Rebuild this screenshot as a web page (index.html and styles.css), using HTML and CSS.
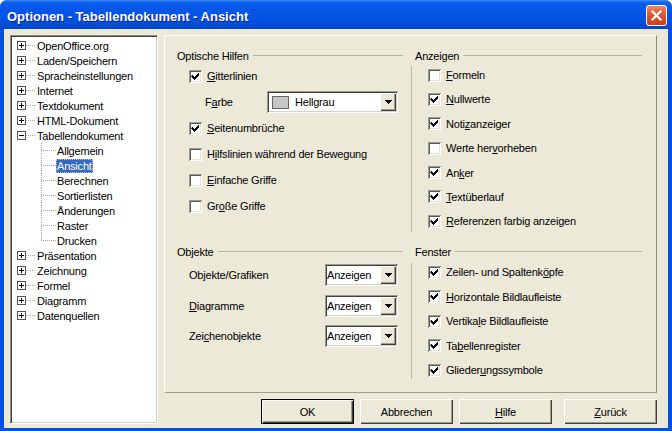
FILE: index.html
```html
<!DOCTYPE html>
<html lang="de">
<head>
<meta charset="utf-8">
<title>Optionen - Tabellendokument - Ansicht</title>
<link rel="stylesheet" href="styles.css">
</head>
<body>
<div class="window">
  <div class="titlebar">
    <span class="title">Optionen - Tabellendokument - Ansicht</span>
    <span class="close"><svg width="19" height="19" viewBox="0 0 19 19"><path d="M5.5 5.5l8 8M13.5 5.5l-8 8" stroke="#fff" stroke-width="2.2" stroke-linecap="square"/></svg></span>
  </div>
  <div class="client">
    <div class="tree">
      <div class="node"><span class="exp plus"></span><span class="conn"></span><span class="lbl">OpenOffice.org</span></div>
      <div class="node"><span class="exp plus"></span><span class="conn"></span><span class="lbl">Laden/Speichern</span></div>
      <div class="node"><span class="exp plus"></span><span class="conn"></span><span class="lbl">Spracheinstellungen</span></div>
      <div class="node"><span class="exp plus"></span><span class="conn"></span><span class="lbl">Internet</span></div>
      <div class="node"><span class="exp plus"></span><span class="conn"></span><span class="lbl">Textdokument</span></div>
      <div class="node"><span class="exp plus"></span><span class="conn"></span><span class="lbl">HTML-Dokument</span></div>
      <div class="node"><span class="exp minus"></span><span class="conn"></span><span class="lbl">Tabellendokument</span></div>
      <div class="node child"><span class="branch"></span><span class="lbl">Allgemein</span></div>
      <div class="node child"><span class="branch"></span><span class="lbl sel">Ansicht</span></div>
      <div class="node child"><span class="branch"></span><span class="lbl">Berechnen</span></div>
      <div class="node child"><span class="branch"></span><span class="lbl">Sortierlisten</span></div>
      <div class="node child"><span class="branch"></span><span class="lbl">Änderungen</span></div>
      <div class="node child"><span class="branch"></span><span class="lbl">Raster</span></div>
      <div class="node child last"><span class="branch"></span><span class="lbl">Drucken</span></div>
      <div class="node"><span class="exp plus"></span><span class="conn"></span><span class="lbl">Präsentation</span></div>
      <div class="node"><span class="exp plus"></span><span class="conn"></span><span class="lbl">Zeichnung</span></div>
      <div class="node"><span class="exp plus"></span><span class="conn"></span><span class="lbl">Formel</span></div>
      <div class="node"><span class="exp plus"></span><span class="conn"></span><span class="lbl">Diagramm</span></div>
      <div class="node"><span class="exp plus"></span><span class="conn"></span><span class="lbl">Datenquellen</span></div>
    </div>
    <div class="main">
      <div class="panel">
        <div class="col colL">
          <div class="legend legL"><span>Optische Hilfen</span></div>
          <div class="rowsL">
            <div class="cb r26"><span class="box"><svg class="chk" width="13" height="13" viewBox="0 0 13 13"><path d="M3 5h1v1h1v1h1v-1h1v-1h1v-1h1v-1h1v3h-1v1h-1v1h-1v1h-1v1h-1v-1h-1v-1h-1v-1h-1z"/></svg></span><span><u>G</u>itterlinien</span></div>
            <div class="field r26"><span class="flabel">F<u>a</u>rbe</span>
              <div class="combo wide"><span class="swatch"></span><span class="ctext">Hellgrau</span><span class="cbtn"><svg width="7" height="4" viewBox="0 0 7 4"><path d="M0 0h7v1h-1v1h-1v1h-1v1h-1v-1h-1v-1h-1v-1h-1z"/></svg></span></div>
            </div>
            <div class="cb r26"><span class="box"><svg class="chk" width="13" height="13" viewBox="0 0 13 13"><path d="M3 5h1v1h1v1h1v-1h1v-1h1v-1h1v-1h1v3h-1v1h-1v1h-1v1h-1v1h-1v-1h-1v-1h-1v-1h-1z"/></svg></span><span><u>S</u>eitenumbrüche</span></div>
            <div class="cb r26"><span class="box"></span><span>H<u>i</u>lfslinien während der Bewegung</span></div>
            <div class="cb r26"><span class="box"></span><span><u>E</u>infache Griffe</span></div>
            <div class="cb r26"><span class="box"></span><span>Gr<u>o</u>ße Griffe</span></div>
          </div>
        </div>
        <div class="col colR">
          <div class="legend legR"><span>Anzeigen</span></div>
          <div class="vbody vtop">
            <div class="cb r18"><span class="box"></span><span><u>F</u>ormeln</span></div>
            <div class="cb r18"><span class="box"><svg class="chk" width="13" height="13" viewBox="0 0 13 13"><path d="M3 5h1v1h1v1h1v-1h1v-1h1v-1h1v-1h1v3h-1v1h-1v1h-1v1h-1v1h-1v-1h-1v-1h-1v-1h-1z"/></svg></span><span><u>N</u>ullwerte</span></div>
            <div class="cb r18"><span class="box"><svg class="chk" width="13" height="13" viewBox="0 0 13 13"><path d="M3 5h1v1h1v1h1v-1h1v-1h1v-1h1v-1h1v3h-1v1h-1v1h-1v1h-1v1h-1v-1h-1v-1h-1v-1h-1z"/></svg></span><span>Noti<u>z</u>anzeiger</span></div>
            <div class="cb r18"><span class="box"></span><span>Werte her<u>v</u>orheben</span></div>
            <div class="cb r18"><span class="box"><svg class="chk" width="13" height="13" viewBox="0 0 13 13"><path d="M3 5h1v1h1v1h1v-1h1v-1h1v-1h1v-1h1v3h-1v1h-1v1h-1v1h-1v1h-1v-1h-1v-1h-1v-1h-1z"/></svg></span><span>An<u>k</u>er</span></div>
            <div class="cb r18"><span class="box"><svg class="chk" width="13" height="13" viewBox="0 0 13 13"><path d="M3 5h1v1h1v1h1v-1h1v-1h1v-1h1v-1h1v3h-1v1h-1v1h-1v1h-1v1h-1v-1h-1v-1h-1v-1h-1z"/></svg></span><span><u>T</u>extüberlauf</span></div>
            <div class="cb r18"><span class="box"><svg class="chk" width="13" height="13" viewBox="0 0 13 13"><path d="M3 5h1v1h1v1h1v-1h1v-1h1v-1h1v-1h1v3h-1v1h-1v1h-1v1h-1v1h-1v-1h-1v-1h-1v-1h-1z"/></svg></span><span><u>R</u>eferenzen farbig anzeigen</span></div>
          </div>
        </div>
        <div class="col colL">
          <div class="legend legL"><span>Objekte</span></div>
          <div class="rowsO">
            <div class="orow"><span class="olabel">Ob<u>j</u>ekte/Grafiken</span>
              <div class="combo small"><span class="ctext">Anzeigen</span><span class="cbtn"><svg width="7" height="4" viewBox="0 0 7 4"><path d="M0 0h7v1h-1v1h-1v1h-1v1h-1v-1h-1v-1h-1v-1h-1z"/></svg></span></div></div>
            <div class="orow"><span class="olabel"><u>D</u>iagramme</span>
              <div class="combo small"><span class="ctext">Anzeigen</span><span class="cbtn"><svg width="7" height="4" viewBox="0 0 7 4"><path d="M0 0h7v1h-1v1h-1v1h-1v1h-1v-1h-1v-1h-1v-1h-1z"/></svg></span></div></div>
            <div class="orow"><span class="olabel">Zei<u>c</u>henobjekte</span>
              <div class="combo small"><span class="ctext">Anzeigen</span><span class="cbtn"><svg width="7" height="4" viewBox="0 0 7 4"><path d="M0 0h7v1h-1v1h-1v1h-1v1h-1v-1h-1v-1h-1v-1h-1z"/></svg></span></div></div>
          </div>
        </div>
        <div class="col colR">
          <div class="legend legR"><span>Fenster</span></div>
          <div class="vbody vbot">
            <div class="cb r18"><span class="box"><svg class="chk" width="13" height="13" viewBox="0 0 13 13"><path d="M3 5h1v1h1v1h1v-1h1v-1h1v-1h1v-1h1v3h-1v1h-1v1h-1v1h-1v1h-1v-1h-1v-1h-1v-1h-1z"/></svg></span><span>Zeilen- und Spaltenk<u>ö</u>pfe</span></div>
            <div class="cb r18"><span class="box"><svg class="chk" width="13" height="13" viewBox="0 0 13 13"><path d="M3 5h1v1h1v1h1v-1h1v-1h1v-1h1v-1h1v3h-1v1h-1v1h-1v1h-1v1h-1v-1h-1v-1h-1v-1h-1z"/></svg></span><span><u>H</u>orizontale Bildlaufleiste</span></div>
            <div class="cb r18"><span class="box"><svg class="chk" width="13" height="13" viewBox="0 0 13 13"><path d="M3 5h1v1h1v1h1v-1h1v-1h1v-1h1v-1h1v3h-1v1h-1v1h-1v1h-1v1h-1v-1h-1v-1h-1v-1h-1z"/></svg></span><span>Vertika<u>l</u>e Bildlaufleiste</span></div>
            <div class="cb r18"><span class="box"><svg class="chk" width="13" height="13" viewBox="0 0 13 13"><path d="M3 5h1v1h1v1h1v-1h1v-1h1v-1h1v-1h1v3h-1v1h-1v1h-1v1h-1v1h-1v-1h-1v-1h-1v-1h-1z"/></svg></span><span>Ta<u>b</u>ellenregister</span></div>
            <div class="cb r18"><span class="box"><svg class="chk" width="13" height="13" viewBox="0 0 13 13"><path d="M3 5h1v1h1v1h1v-1h1v-1h1v-1h1v-1h1v3h-1v1h-1v1h-1v1h-1v1h-1v-1h-1v-1h-1v-1h-1z"/></svg></span><span>Glieder<u>u</u>ngssymbole</span></div>
          </div>
        </div>
      </div>
      <div class="buttons">
        <span class="btn default">OK</span>
        <span class="btn">Abbrechen</span>
        <span class="btn"><u>H</u>ilfe</span>
        <span class="btn wide-gap"><u>Z</u>urück</span>
      </div>
    </div>
  </div>
</div>
</body>
</html>
```

FILE: styles.css
```css
* { box-sizing: border-box; }
html, body { margin: 0; padding: 0; }
body {
  width: 672px;
  height: 431px;
  overflow: hidden;
  font-family: "Liberation Sans", Arial, sans-serif;
  font-size: 11px;
  letter-spacing: -0.2px;
  color: #000;
  background: #fff;
}
u { text-decoration: underline; text-underline-offset: 1px; }

.window {
  width: 672px;
  height: 431px;
  display: flex;
  flex-direction: column;
  background: #0550e0;
  border-radius: 7px 7px 0 0;
  overflow: hidden;
}

.titlebar {
  height: 29px;
  flex: none;
  display: flex;
  justify-content: space-between;
  align-items: flex-start;
  background: linear-gradient(180deg, #3f8ff6 0px, #1467f1 2px, #0a5cee 4px, #0556e8 10px, #0453e2 18px, #034cd8 25px, #0346cf 29px);
}
.title {
  margin: 9px 0 0 7px;
  font-weight: bold;
  font-size: 13px;
  line-height: 15px;
  letter-spacing: 0;
  color: #fff;
  text-shadow: 1px 1px 0 #0b1f8c;
}
.close {
  margin: 5px 5px 0 0;
  width: 21px;
  height: 21px;
  border: 1px solid #fff;
  border-radius: 3px;
  background: linear-gradient(180deg, #e98a6c 0%, #e0603f 35%, #d24a29 70%, #c8401f 100%);
  display: flex;
  align-items: center;
  justify-content: center;
}
.close svg { display: block; }

.client {
  flex: 1;
  margin: 0 4px 3px 4px;
  background: #ece9d8;
  display: flex;
  gap: 6px;
  padding: 6px 11px 4px 6px;
}

/* tree */
.tree {
  width: 148px;
  flex: none;
  background: #fff;
  border: 1px solid;
  border-color: #8e8c80 #fff #fff #8e8c80;
  box-shadow: inset 1px 1px 0 #404040, inset -1px -1px 0 #d4d0c8;
  padding-top: 2px;
}
.node {
  height: 15px;
  display: flex;
  align-items: center;
  white-space: nowrap;
}
.exp {
  width: 9px;
  height: 9px;
  margin-left: 6px;
  border: 1px solid #555;
  background-color: #fff;
  flex: none;
}
.exp.plus {
  background: linear-gradient(#000, #000) 1px 3px / 5px 1px no-repeat,
              linear-gradient(#000, #000) 3px 1px / 1px 5px no-repeat, #fff;
}
.exp.minus {
  background: linear-gradient(#000, #000) 1px 3px / 5px 1px no-repeat, #fff;
}
.conn {
  width: 10px;
  height: 1px;
  flex: none;
  background: repeating-linear-gradient(90deg, #a8a8a8 0 1px, transparent 1px 2px);
}
.lbl {
  padding: 0 1px;
  line-height: 14px;
}
.sel {
  background: #316ac5;
  color: #fff;
  outline: 1px dotted #d9c27a;
  outline-offset: -1px;
}
.branch {
  width: 15px;
  height: 15px;
  margin-left: 30px;
  flex: none;
  background:
    repeating-linear-gradient(90deg, #a8a8a8 0 1px, transparent 1px 2px) 0 7px / 15px 1px no-repeat,
    repeating-linear-gradient(180deg, #a8a8a8 0 1px, transparent 1px 2px) 0 0 / 1px 15px no-repeat;
}
.last .branch {
  background:
    repeating-linear-gradient(90deg, #a8a8a8 0 1px, transparent 1px 2px) 0 7px / 15px 1px no-repeat,
    repeating-linear-gradient(180deg, #a8a8a8 0 1px, transparent 1px 2px) 0 0 / 1px 8px no-repeat;
}

/* main */
.main {
  flex: 1;
  display: flex;
  flex-direction: column;
  gap: 6px;
}
.panel {
  flex: 1;
  border: 1px solid;
  border-color: #fff #8a877b #a19e90 #fff;
  display: grid;
  grid-template-columns: 246px 1fr;
  grid-template-rows: 196px 1fr;
  padding-top: 12px;
}
.col { display: flex; flex-direction: column; }
.colL { padding-left: 12px; padding-right: 8px; }
.colR { padding-right: 14px; }

.legend {
  height: 15px;
  display: flex;
  align-items: center;
  white-space: nowrap;
}
.legend::after {
  content: "";
  flex: 1;
  height: 1px;
  margin-left: 4px;
  background: #b8b5a6;
}
.legR { padding-left: 4px; }

.rowsL { margin-left: 12px; display: flex; flex-direction: column; }
.r26 { height: 26px; }
.r18 { height: 18px; }

.cb {
  display: flex;
  align-items: center;
  gap: 5px;
  white-space: nowrap;
}
.box {
  width: 13px;
  height: 13px;
  flex: none;
  background: #fff;
  box-shadow: inset 1px 1px 0 #9d9a8e, inset -1px -1px 0 #fff, inset 2px 2px 0 #5a5a5a, inset -2px -2px 0 #e4e1d4;
}
.chk { display: block; fill: #000; }

.field { display: flex; align-items: center; }
.flabel { margin-left: 16px; width: 62px; }

.combo {
  height: 22px;
  display: flex;
  align-items: center;
  background: #fff;
  padding: 2px;
  box-shadow: inset 1px 1px 0 #9d9a8e, inset -1px -1px 0 #fff, inset 2px 2px 0 #404040, inset -2px -2px 0 #d4d0c8;
}
.combo.wide { width: 131px; }
.combo.small { width: 73px; }
.swatch {
  width: 17px;
  height: 13px;
  margin-left: 3px;
  border: 1px solid #666;
  background: #c6c6c6;
  flex: none;
}
.wide .ctext { margin-left: 6px; }
.ctext { flex: 1; white-space: nowrap; }
.cbtn {
  width: 16px;
  height: 18px;
  flex: none;
  display: flex;
  align-items: center;
  justify-content: center;
  background: #ece9d8;
  box-shadow: inset 1px 1px 0 #fff, inset -1px -1px 0 #404040, inset -2px -2px 0 #9d9a8e;
}
.cbtn svg { display: block; fill: #000; }

.vbody {
  border-left: 1px solid #b8b5a6;
  padding-left: 16px;
  display: flex;
  flex-direction: column;
}
.vtop { margin-top: 3px; gap: 6.4px; padding-bottom: 2px; }
.vbot { margin-top: 4px; gap: 6.5px; }

.rowsO {
  margin-left: 12px;
  margin-top: 5px;
  display: flex;
  flex-direction: column;
  gap: 8.5px;
}
.orow { height: 22px; display: flex; align-items: center; white-space: nowrap; }
.olabel { width: 136px; }

/* buttons */
.buttons {
  height: 25px;
  flex: none;
  display: flex;
  justify-content: flex-end;
  gap: 6px;
}
.btn {
  width: 93px;
  height: 25px;
  display: flex;
  align-items: center;
  justify-content: center;
  background: #ece9d8;
  box-shadow: inset 1px 1px 0 #fff, inset -1px -1px 0 #404040, inset -2px -2px 0 #9d9a8e;
}
.btn.default {
  border: 1px solid #000;
  box-shadow: inset 1px 1px 0 #fff, inset -1px -1px 0 #404040, inset -2px -2px 0 #9d9a8e;
}
.btn.wide-gap { margin-left: 6px; }
```
